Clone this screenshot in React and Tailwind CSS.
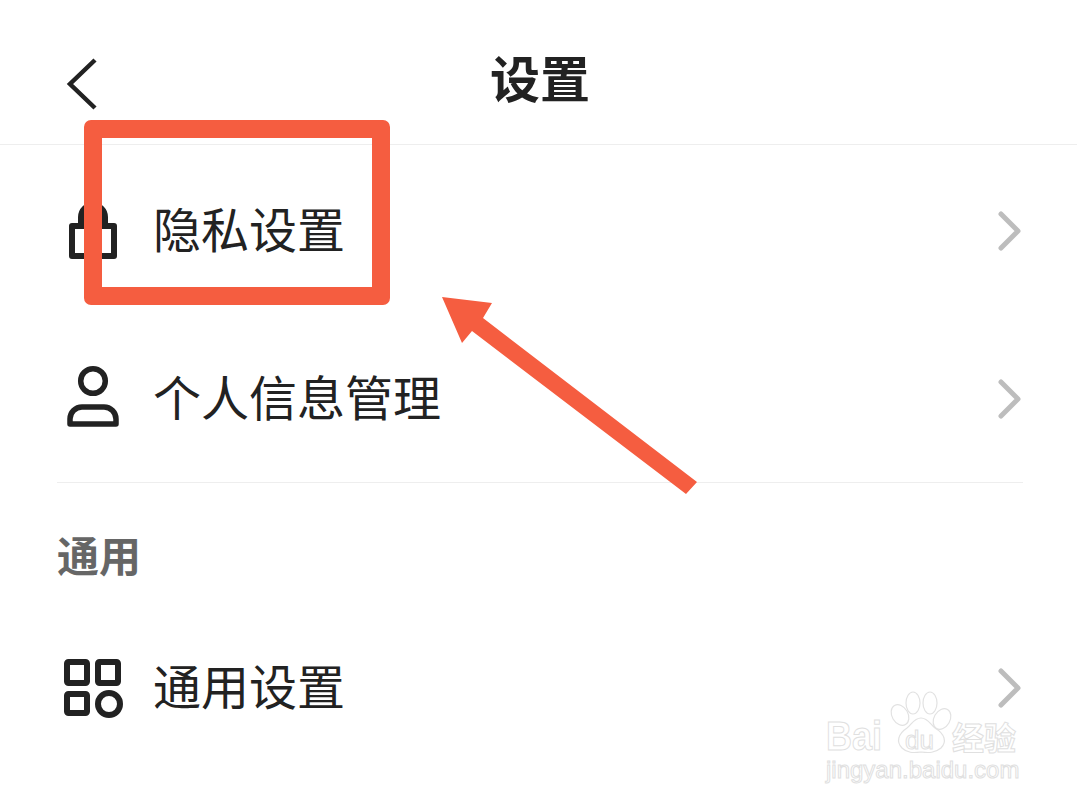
import React from 'react';

const font = { fontFamily: '"Noto Sans CJK SC", "Liberation Sans", sans-serif' };
const latin = { fontFamily: '"Liberation Sans", sans-serif' };

function LockIcon() {
  return (
    <svg width="70" height="68" viewBox="0 0 70 68" fill="none" stroke="#222" strokeWidth="6" strokeLinejoin="round">
      <path d="M24 31V22a12 12 0 0 1 24 0v9" />
      <rect x="15" y="31" width="42" height="30" />
    </svg>
  );
}

function PersonIcon() {
  return (
    <svg width="70" height="68" viewBox="0 0 70 68" fill="none" stroke="#222" strokeWidth="5.5" strokeLinejoin="round">
      <circle cx="36" cy="18" r="12.3" />
      <path d="M13 61v-5a12 12 0 0 1 12-12h22a12 12 0 0 1 12 12v5z" />
    </svg>
  );
}

function GridIcon() {
  return (
    <svg width="70" height="68" viewBox="0 0 70 68" fill="none" stroke="#222" strokeWidth="6" strokeLinejoin="round">
      <rect x="10" y="10" width="20" height="21" rx="1.5" />
      <rect x="41" y="10" width="20" height="21" rx="1.5" />
      <rect x="10" y="42" width="20" height="19" rx="1.5" />
      <circle cx="52" cy="52" r="11" />
    </svg>
  );
}

function Chevron() {
  return (
    <svg className="mt-[4px]" width="24" height="40" viewBox="0 0 24 40" fill="none" stroke="#bdbdbd" strokeWidth="5" strokeLinecap="round" strokeLinejoin="round">
      <path d="M3 3l17 17L3 37" />
    </svg>
  );
}

function Row({ icon, label }) {
  return (
    <div className="h-[168px] flex items-center pl-[57px] pr-[55px]">
      <div className="w-[96px] shrink-0">{icon}</div>
      <span className="flex-1 text-[48px] leading-none text-[#222] pb-[4px]">{label}</span>
      <Chevron />
    </div>
  );
}

function Watermark() {
  const outline = 'text-transparent [-webkit-text-stroke:1px_#e0e0e0]';
  return (
    <div className="absolute left-[826px] top-[716px] w-[200px] flex flex-col">
      <svg className="absolute left-[64px] top-[-26px]" width="66" height="68" viewBox="0 0 66 68" fill="none" stroke="#e2e2e2" strokeWidth="1.2">
        <ellipse cx="10" cy="25" rx="8" ry="11" transform="rotate(-30 10 25)" />
        <ellipse cx="23" cy="13" rx="7" ry="11" />
        <ellipse cx="40" cy="13" rx="7" ry="11" />
        <ellipse cx="52" cy="29" rx="8" ry="11" transform="rotate(30 52 29)" />
        <path d="M31 28c7 0 9 6 14 10 10 6 12 14 6 20-6 5-12 5-20 4-8 1-14 1-19-4-6-6-4-14 5-20 5-4 7-10 14-10z" />
      </svg>
      <div className="h-[40px] flex items-center">
        <span className={`w-[79px] text-[40px] leading-none font-bold origin-left scale-x-[0.9] ${outline}`} style={latin}>Bai</span>
        <span className={`w-[47px] text-[26px] leading-none pt-[8px] ${outline}`} style={latin}>du</span>
        <span className={`text-[32px] leading-none font-bold ${outline}`}>经验</span>
      </div>
      <span className={`mt-[2px] text-[24px] leading-none whitespace-nowrap ${outline}`} style={latin}>jingyan.baidu.com</span>
    </div>
  );
}

export default function App() {
  return (
    <div className="relative w-[1077px] h-[807px] overflow-hidden bg-white" style={font}>
      <header className="h-[145px] grid grid-cols-[1fr_auto_1fr] items-center border-b border-[#eeeeee]">
        <div className="pl-[66px] pt-[24px]">
          <svg width="32" height="52" viewBox="0 0 32 52" fill="none" stroke="#222" strokeWidth="4.5">
            <path d="M29 2L4 26l25 24" />
          </svg>
        </div>
        <h1 className="text-[50px] leading-none font-bold text-[#222] pt-[8px] pl-[3px]">设置</h1>
        <div />
      </header>

      <Row icon={<LockIcon />} label="隐私设置" />
      <Row icon={<PersonIcon />} label="个人信息管理" />
      <div className="mt-[1px] ml-[57px] mr-[54px] border-t border-[#eeeeee]" />

      <div className="h-[119px] pl-[57px] pt-[50px]">
        <span className="block text-[42px] leading-none font-bold text-[#666]">通用</span>
      </div>
      <Row icon={<GridIcon />} label="通用设置" />

      {/* annotation */}
      <div className="absolute left-[84px] top-[120px] w-[306px] h-[185px] border-[18px] border-[#f55d40] rounded-[7px]" />
      <svg className="absolute left-0 top-0" width="1077" height="807" viewBox="0 0 1077 807">
        <polygon points="442,297 492,303 483,318 697,482 686,494 472,331 462,343" fill="#f55d40" />
      </svg>

      <Watermark />
    </div>
  );
}
